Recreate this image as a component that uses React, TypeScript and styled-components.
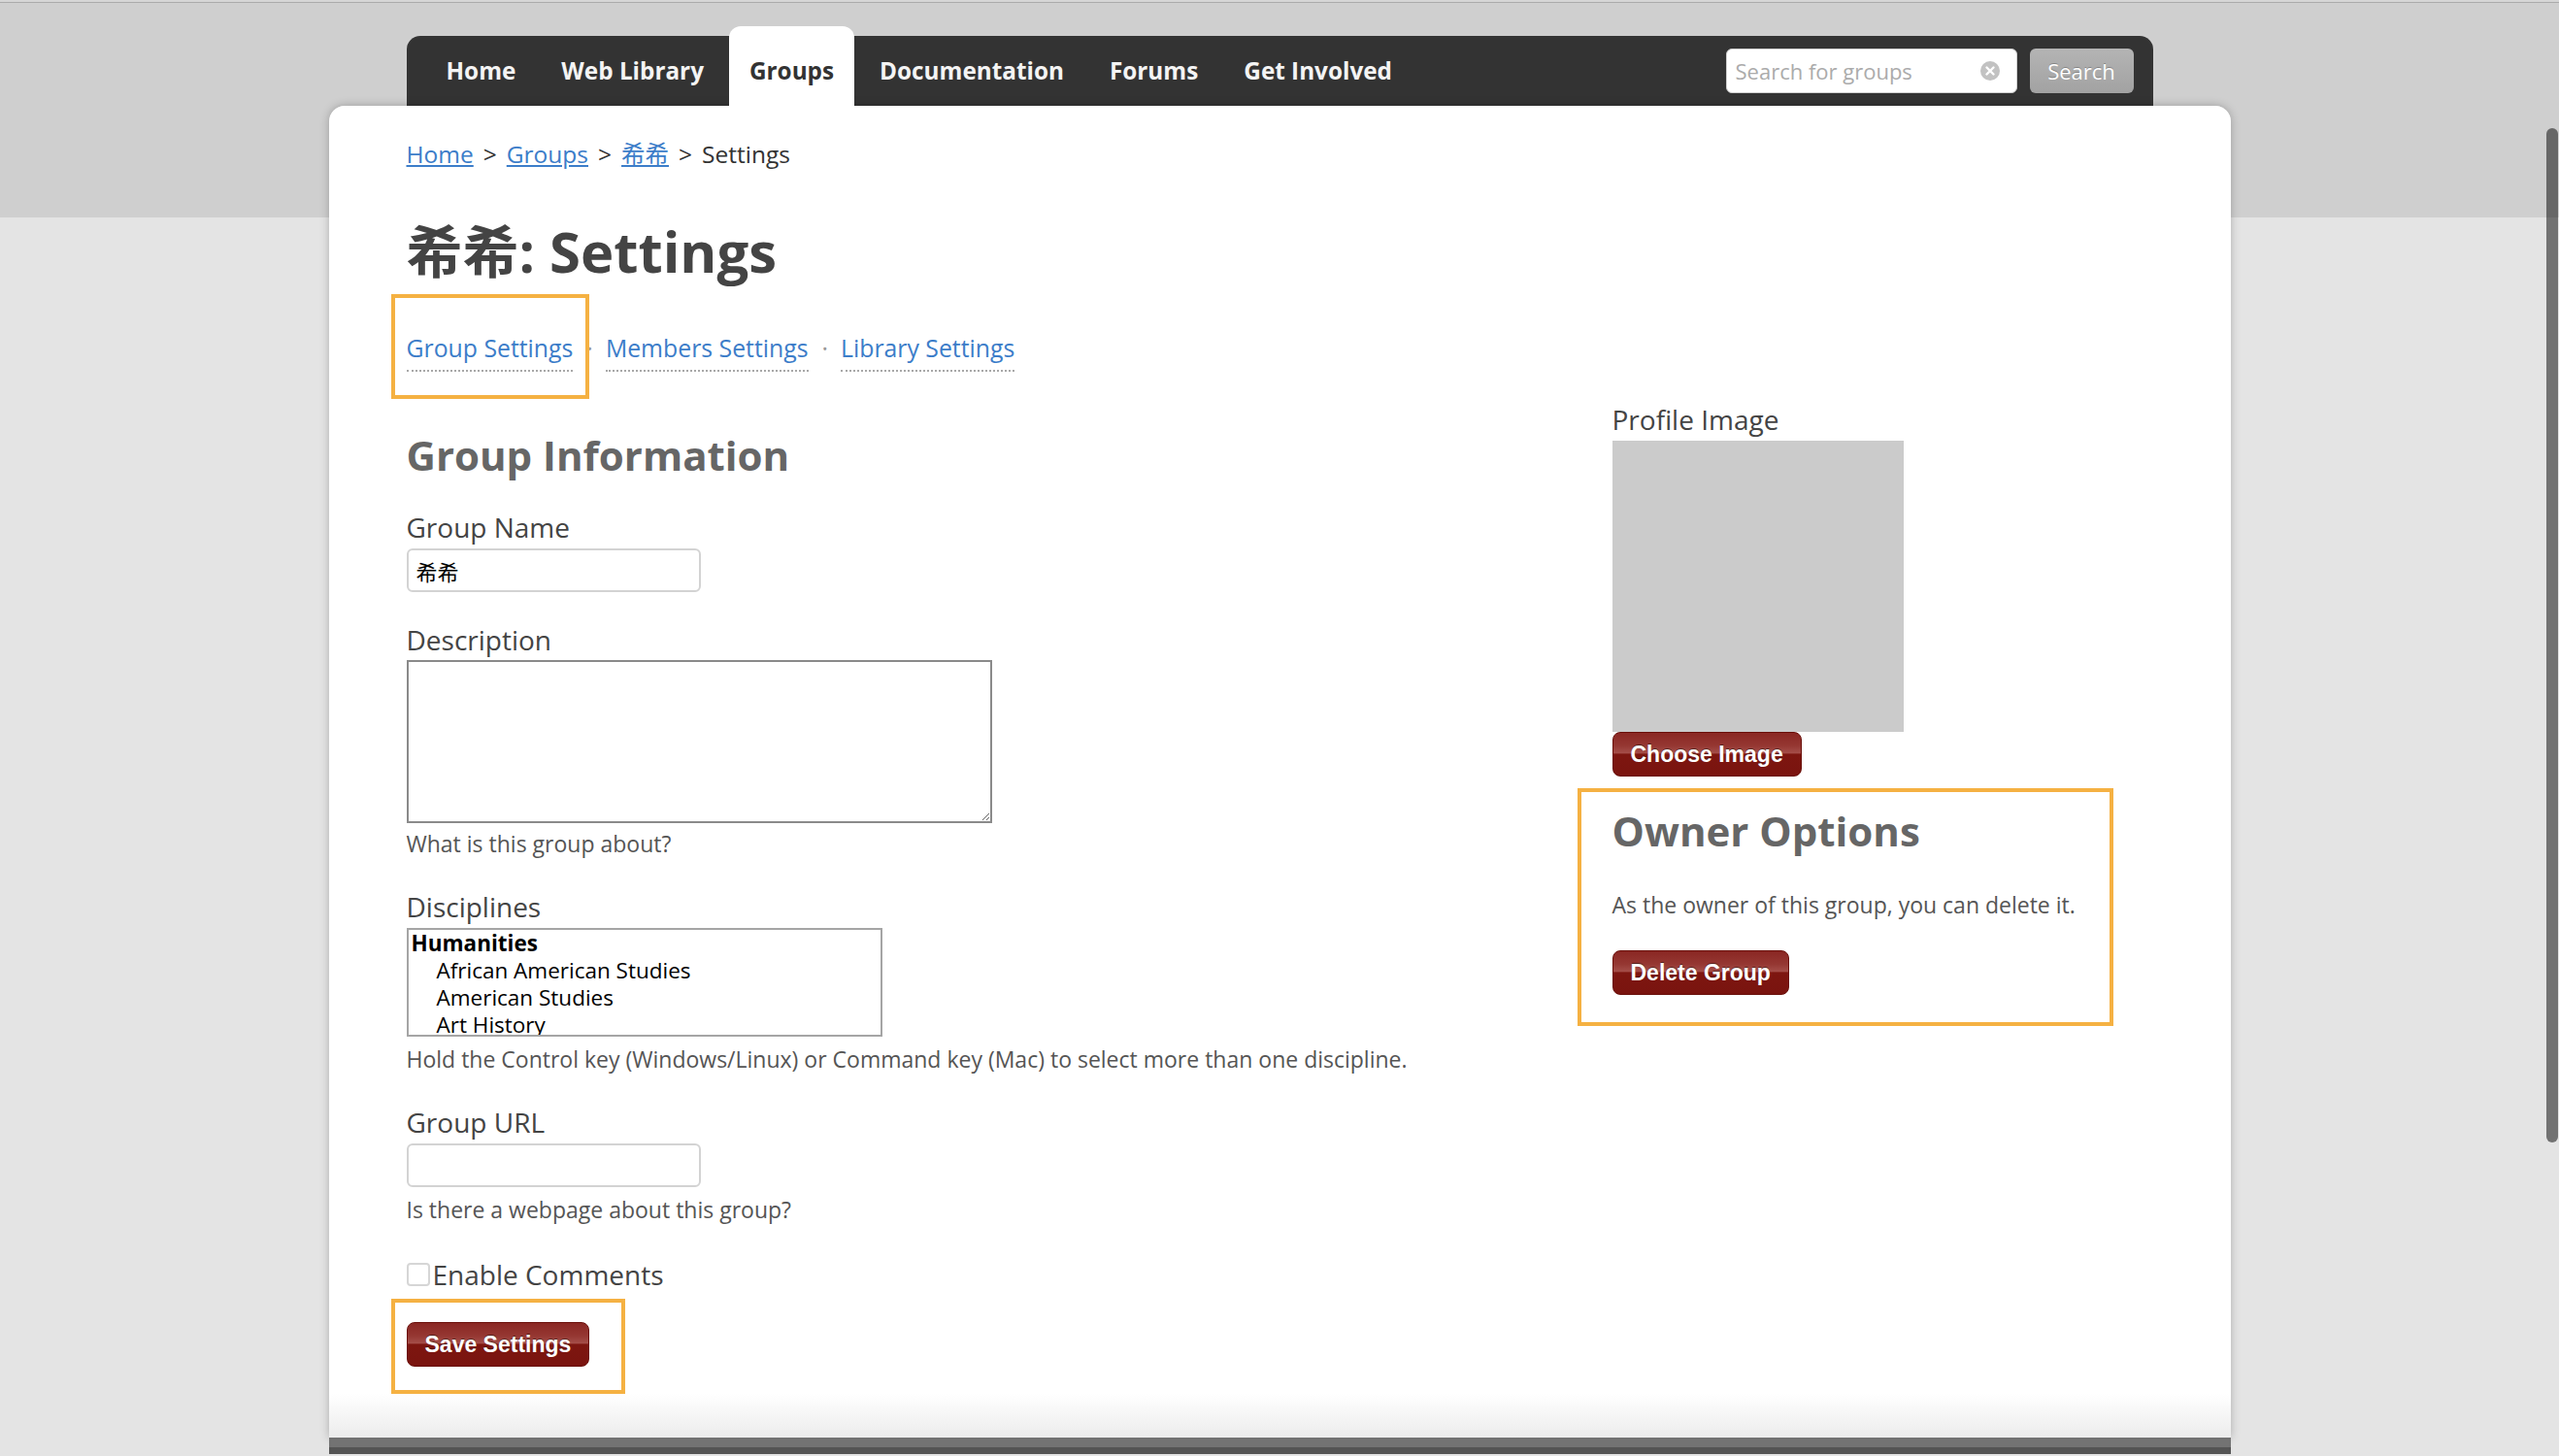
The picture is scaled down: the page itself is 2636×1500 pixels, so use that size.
import React from "react";
import styled, { createGlobalStyle, css } from "styled-components";

const FONT = `"Open Sans", "Noto Sans CJK SC", sans-serif`;
const BTN_FONT = `"Liberation Sans", Arial, "Noto Sans CJK SC", sans-serif`;
const LINK = "#3c7dc9";

const GlobalStyle = createGlobalStyle`
  * { box-sizing: border-box; }
  html, body { margin: 0; padding: 0; height: 100%; overflow: hidden; }
  body {
    font-family: ${FONT};
    background-color: #e4e4e4;
    background-image: linear-gradient(#d6d6d6 0 2px, #ababab 2px 3px, #cfcfcf 3px 224px, #e4e4e4 224px);
    background-repeat: no-repeat;
  }
`;

const Page = styled.div`
  width: 1959px;
  margin: 0 auto;
  padding-top: 37px;
`;

const NavBar = styled.nav`
  margin: 0 80px;
  height: 72px;
  background: #333;
  border-radius: 14px 14px 0 0;
  padding: 0 20px;
  display: flex;
  justify-content: space-between;
  align-items: stretch;
`;

const NavList = styled.div`
  display: flex;
  align-items: stretch;
  gap: 5px;
`;

const NavItem = styled.a<{ $active?: boolean }>`
  display: flex;
  align-items: center;
  padding: 0 21px 2px;
  font-size: 24.3px;
  font-weight: 700;
  color: #f4f4f4;
  text-decoration: none;
  ${(p) =>
    p.$active &&
    css`
      background: #fff;
      color: #333;
      margin-top: -10px;
      padding-top: 10px;
      border-radius: 12px 12px 0 0;
    `}
`;

const SearchForm = styled.form`
  display: flex;
  align-items: center;
  gap: 13px;
  margin: 0;
`;

const SearchField = styled.div`
  width: 300px;
  height: 46px;
  background: #fff;
  border: 1px solid #d0d0d0;
  border-radius: 6px;
  display: flex;
  align-items: center;
  padding: 0 16px 0 9px;
  gap: 6px;
`;

const SearchInput = styled.input`
  flex: 1;
  min-width: 0;
  border: none;
  outline: none;
  background: transparent;
  font-family: ${FONT};
  font-size: 22px;
  color: #333;
  padding: 0;
  &::placeholder { color: #ababab; }
`;

const SearchButton = styled.button`
  width: 107px;
  height: 46px;
  border: none;
  border-radius: 6px;
  background: linear-gradient(#b4b4b4, #a2a2a2);
  color: #fff;
  font-family: ${FONT};
  font-size: 22px;
  text-shadow: 0 -1px 0 rgba(0, 0, 0, 0.25);
  padding: 0;
`;

const Card = styled.main`
  background: linear-gradient(#fff calc(100% - 45px), #ececec);
  border-radius: 16px 16px 0 0;
  box-shadow: 0 0 10px rgba(0, 0, 0, 0.25);
  padding: 33px 80px 73px;
`;

const Breadcrumbs = styled.div`
  font-size: 24.5px;
  line-height: 34px;
  color: #333;
`;

const CrumbLink = styled.a`
  color: ${LINK};
  text-decoration: underline;
`;

const CrumbSep = styled.span`
  padding: 0 10px;
  color: #333;
`;

const Title = styled.h1`
  margin: 48px 0 0;
  font-size: 58px;
  line-height: 70px;
  font-weight: 700;
  color: #444;
`;

const SubNav = styled.div`
  margin-top: 47px;
  display: flex;
  align-items: flex-start;
  font-size: 24.8px;
  line-height: 34px;
`;

const SubLink = styled.a`
  display: inline-block;
  color: ${LINK};
  text-decoration: none;
  padding-bottom: 6px;
  border-bottom: 2px dotted #a8a8a8;
`;

const SubSep = styled.span`
  color: #999;
  padding: 0 13px 0 14px;
`;

const Callout = styled.div<{ $inset: string; $block?: boolean }>`
  position: relative;
  display: ${(p) => (p.$block ? "flex" : "inline-block")};
  flex: ${(p) => (p.$block ? 1 : "none")};
  &::after {
    content: "";
    position: absolute;
    inset: ${(p) => p.$inset};
    border: 4px solid #f5b142;
    pointer-events: none;
  }
`;

const Columns = styled.div`
  margin-top: 30px;
  display: grid;
  grid-template-columns: 1fr 557px;
`;

const Column = styled.div`
  display: flex;
  flex-direction: column;
  align-items: flex-start;
`;

const SectionTitle = styled.h2<{ $top?: number }>`
  margin: ${(p) => p.$top ?? 0}px 0 0;
  font-size: 42px;
  line-height: 50px;
  font-weight: 700;
  color: #666;
`;

const Field = styled.div`
  margin-top: 30px;
  display: flex;
  flex-direction: column;
  align-items: flex-start;
`;

const Label = styled.label`
  font-size: 28px;
  line-height: 38px;
  color: #444;
`;

const TextInput = styled.input`
  margin-top: 3px;
  width: 303px;
  height: 45px;
  border: 2px solid #d3d3d3;
  border-radius: 6px;
  padding: 0 8px;
  font-family: ${FONT};
  font-size: 22px;
  color: #000;
  outline: none;
`;

const TextArea = styled.textarea`
  margin-top: 2px;
  width: 603px;
  height: 168px;
  border: 2px solid #8a8a8a;
  border-radius: 0;
  font-family: ${FONT};
  font-size: 22px;
  outline: none;
`;

const Help = styled.div<{ $top?: number }>`
  margin-top: ${(p) => p.$top ?? 7}px;
  font-size: 23px;
  line-height: 32px;
  color: #555;
`;

const ListBox = styled.div`
  margin-top: 3px;
  width: 490px;
  height: 112px;
  border: 2px solid #a5a5a5;
  overflow: hidden;
  font-size: 22.5px;
  line-height: 28px;
  color: #000;
`;

const ListItem = styled.div<{ $group?: boolean }>`
  padding-left: ${(p) => (p.$group ? 3 : 29)}px;
  font-weight: ${(p) => (p.$group ? 700 : 400)};
  white-space: nowrap;
`;

const CheckRow = styled.label`
  margin-top: 32px;
  display: flex;
  align-items: center;
  font-size: 28px;
  line-height: 38px;
  color: #444;
`;

const Checkbox = styled.input`
  appearance: none;
  width: 24px;
  height: 24px;
  margin: 0 3px 0 0;
  border: 2px solid #d6d6d6;
  border-radius: 4px;
  background: #fff;
`;

const RedButton = styled.button<{ $top?: number }>`
  margin-top: ${(p) => p.$top ?? 0}px;
  height: 46px;
  padding: 0 18px;
  border: 1px solid #6a0f0a;
  border-radius: 8px;
  background: linear-gradient(
    to bottom,
    #8a2723 0%,
    #953732 30%,
    #a44d48 47%,
    #7d1610 50%,
    #7a140f 100%
  );
  color: #fff;
  font-family: ${BTN_FONT};
  font-size: 23px;
  font-weight: 700;
  text-shadow: 0 -1px 0 rgba(0, 0, 0, 0.45);
  white-space: nowrap;
`;

const SaveWrap = styled.div`
  margin-top: 30px;
`;

const ImageBox = styled.div`
  margin-top: 3px;
  width: 300px;
  height: 300px;
  background: #cbcbcb;
`;

const OwnerWrap = styled.div`
  margin-top: 31px;
  align-self: stretch;
  display: flex;
`;

const OwnerBody = styled.div`
  display: flex;
  flex-direction: column;
  align-items: flex-start;
  width: 100%;
`;

const Footer = styled.footer`
  height: 17px;
  border-top: 10px solid #737373;
  background: #545454;
`;

const ScrollThumb = styled.div`
  position: fixed;
  right: 1px;
  top: 132px;
  width: 12px;
  height: 1045px;
  border-radius: 6px;
  background: rgba(0, 0, 0, 0.5);
`;

const ClearIcon = () => (
  <svg width="22" height="22" viewBox="0 0 22 22" aria-hidden="true">
    <circle cx="11" cy="11" r="10" fill="#c2c2c2" />
    <path d="M7.5 7.5 L14.5 14.5 M14.5 7.5 L7.5 14.5" stroke="#fff" strokeWidth="2.4" strokeLinecap="round" />
  </svg>
);

const navItems = ["Home", "Web Library", "Groups", "Documentation", "Forums", "Get Involved"];
const disciplines = ["African American Studies", "American Studies", "Art History"];

export default function App() {
  return (
    <>
      <GlobalStyle />
      <Page>
        <NavBar>
          <NavList>
            {navItems.map((n) => (
              <NavItem key={n} href="#" $active={n === "Groups"}>
                {n}
              </NavItem>
            ))}
          </NavList>
          <SearchForm onSubmit={(e) => e.preventDefault()}>
            <SearchField>
              <SearchInput placeholder="Search for groups" />
              <ClearIcon />
            </SearchField>
            <SearchButton type="submit">Search</SearchButton>
          </SearchForm>
        </NavBar>

        <Card>
          <Breadcrumbs>
            <CrumbLink href="#">Home</CrumbLink>
            <CrumbSep>&gt;</CrumbSep>
            <CrumbLink href="#">Groups</CrumbLink>
            <CrumbSep>&gt;</CrumbSep>
            <CrumbLink href="#">希希</CrumbLink>
            <CrumbSep>&gt;</CrumbSep>
            Settings
          </Breadcrumbs>

          <Title>希希: Settings</Title>

          <SubNav>
            <Callout $inset="-38px -17px -28px -16px">
              <SubLink href="#">Group Settings</SubLink>
            </Callout>
            <SubSep>·</SubSep>
            <SubLink href="#">Members Settings</SubLink>
            <SubSep>·</SubSep>
            <SubLink href="#">Library Settings</SubLink>
          </SubNav>

          <Columns>
            <Column>
              <SectionTitle $top={31}>Group Information</SectionTitle>

              <Field>
                <Label>Group Name</Label>
                <TextInput defaultValue="希希" />
              </Field>

              <Field>
                <Label>Description</Label>
                <TextArea />
                <Help $top={5}>What is this group about?</Help>
              </Field>

              <Field>
                <Label>Disciplines</Label>
                <ListBox>
                  <ListItem $group>Humanities</ListItem>
                  {disciplines.map((d) => (
                    <ListItem key={d}>{d}</ListItem>
                  ))}
                </ListBox>
                <Help $top={7}>
                  Hold the Control key (Windows/Linux) or Command key (Mac) to select more than one discipline.
                </Help>
              </Field>

              <Field>
                <Label>Group URL</Label>
                <TextInput />
                <Help>Is there a webpage about this group?</Help>
              </Field>

              <CheckRow>
                <Checkbox type="checkbox" />
                Enable Comments
              </CheckRow>

              <SaveWrap>
                <Callout $inset="-24px -37px -28px -16px">
                  <RedButton>Save Settings</RedButton>
                </Callout>
              </SaveWrap>
            </Column>

            <Column>
              <Label>Profile Image</Label>
              <ImageBox />
              <RedButton>Choose Image</RedButton>

              <OwnerWrap>
                <Callout $inset="-19px 41px -32px -36px" $block>
                  <OwnerBody>
                    <SectionTitle>Owner Options</SectionTitle>
                    <Help $top={35}>As the owner of this group, you can delete it.</Help>
                    <RedButton $top={31}>Delete Group</RedButton>
                  </OwnerBody>
                </Callout>
              </OwnerWrap>
            </Column>
          </Columns>
        </Card>
        <Footer />
      </Page>
      <ScrollThumb />
    </>
  );
}
